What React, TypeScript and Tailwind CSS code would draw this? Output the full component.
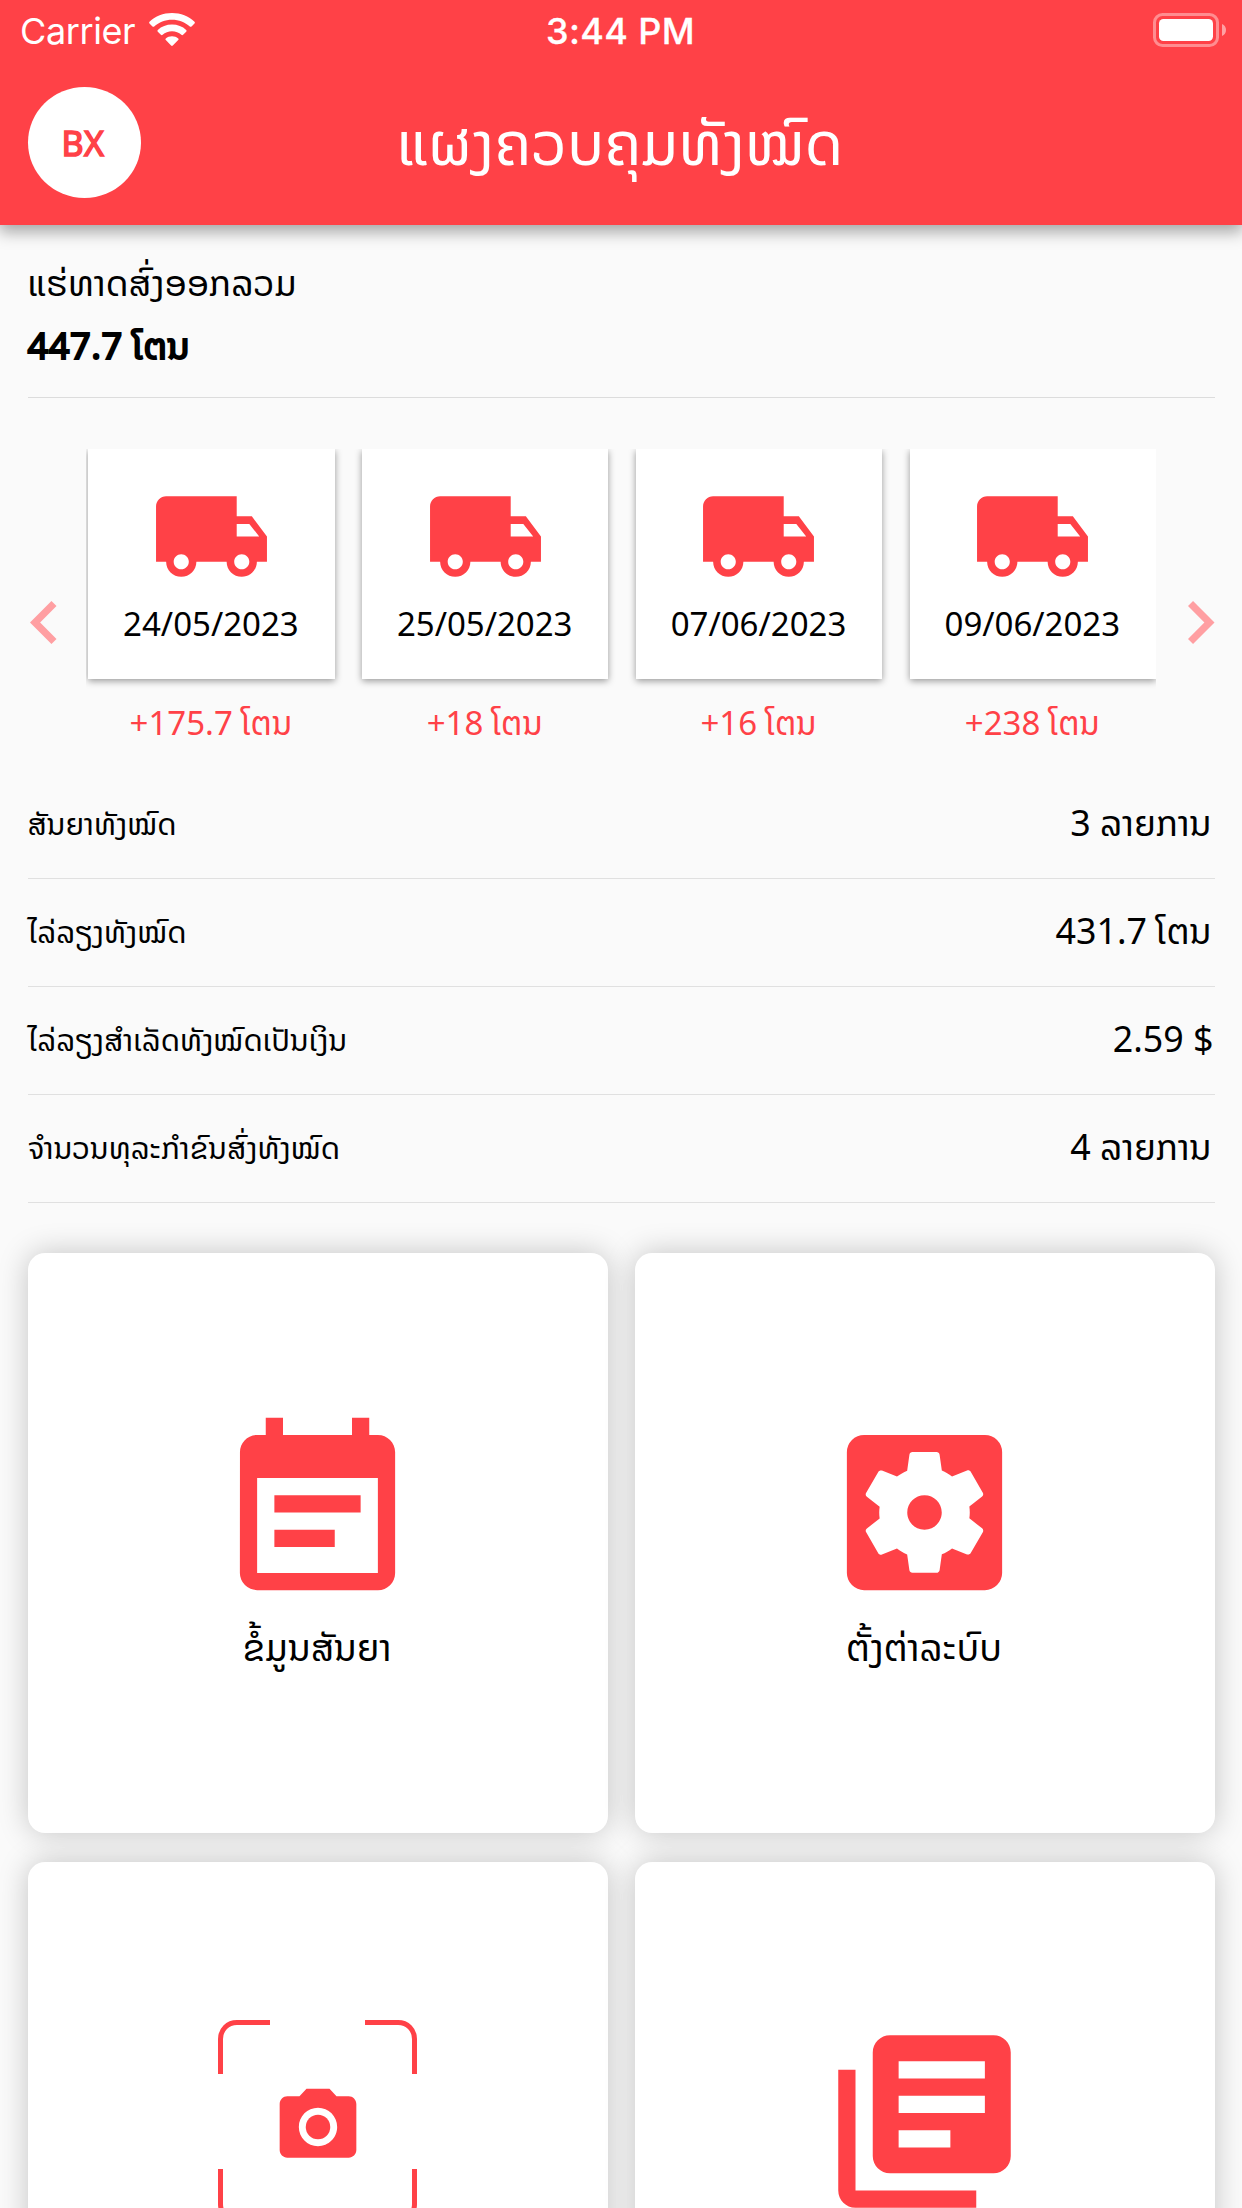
import React from 'react';
import {
  MdEventNote,
  MdLibraryBooks,
  MdLocalShipping,
  MdPhotoCamera,
  MdSettingsApplications,
} from 'react-icons/md';

const shipments = [
  { date: '24/05/2023', amount: '+175.7 ໂຕນ' },
  { date: '25/05/2023', amount: '+18 ໂຕນ' },
  { date: '07/06/2023', amount: '+16 ໂຕນ' },
  { date: '09/06/2023', amount: '+238 ໂຕນ' },
];

const totals = [
  { label: 'ສັນຍາທັງໝົດ', value: '3 ລາຍການ', end: 'mr-[3px]' },
  { label: 'ໄລ່ລຽງທັງໝົດ', value: '431.7 ໂຕນ', end: 'mr-[3px]' },
  { label: 'ໄລ່ລຽງສຳເລັດທັງໝົດເປັນເງິນ', value: '2.59 $', end: 'mr-[1px]' },
  { label: 'ຈຳນວນທຸລະກຳຂົນສົ່ງທັງໝົດ', value: '4 ລາຍການ', end: 'mr-[3px]' },
];

function StatusBar() {
  return (
    <div className="flex h-[60px] items-center justify-between pr-[16px] pl-[20px] font-['Inter',sans-serif] text-[36px] leading-[60px] text-white">
      <div className="flex w-[400px] items-center gap-[14px] pt-[2px]">
        <span className="tracking-[-0.400px]">Carrier</span>
        <svg className="-mt-[2px] h-[34px] w-[46px]" viewBox="0 0 46 34" fill="#fff">
          <path d="M23 0C14.3 0 6.300 3.300.5 8.700c-.5.5-.5 1.200 0 1.700l3 3c.5.5 1.200.5 1.700 0C9.900 9.200 16.100 6.700 23 6.700s13.100 2.500 17.800 6.700c.5.5 1.200.5 1.700 0l3-3c.5-.5.5-1.200 0-1.700C39.700 3.300 31.700 0 23 0z" />
          <path d="M23 11.600c-5.500 0-10.500 2-14.200 5.400-.5.5-.5 1.200 0 1.700l3.100 3.100c.5.5 1.200.5 1.700 0 2.500-2.200 5.800-3.500 9.400-3.500s6.900 1.300 9.400 3.500c.5.5 1.200.5 1.700 0l3.100-3.100c.5-.5.5-1.200 0-1.700-3.700-3.400-8.700-5.400-14.200-5.400z" />
          <path d="M23 23.200c-2.400 0-4.600.9-6.200 2.300-.5.5-.5 1.200 0 1.600l5.300 5.500c.5.5 1.200.5 1.700 0l5.400-5.500c.5-.5.5-1.200 0-1.600-1.600-1.400-3.800-2.300-6.200-2.300z" />
        </svg>
      </div>
      <span className="pt-[2px] pr-[5px] font-medium tracking-[0.400px] [-webkit-text-stroke:0.300px_white]">3:44 PM</span>
      <div className="flex w-[400px] justify-end">
        <svg className="h-[34px] w-[73px]" viewBox="0 0 73 34">
          <rect x="1.500" y="1.500" width="63" height="31" rx="8" fill="none" stroke="#fff" strokeOpacity=".4" strokeWidth="3" />
          <rect x="6" y="6" width="54" height="22" rx="4.500" fill="#fff" />
          <path d="M69 11c2.500 1 4 3.300 4 6s-1.500 5-4 6z" fill="#fff" fillOpacity=".5" />
        </svg>
      </div>
    </div>
  );
}

function Header() {
  return (
    <header className="h-[225px] bg-[#ff4147] shadow-[0_6px_15px_1px_rgba(0,0,0,0.34)]">
      <StatusBar />
      <div className="flex h-[165px] items-center justify-between px-[27.500px]">
        <div className="flex h-[111px] w-[113px] items-center justify-center rounded-[50%] bg-white pt-[2px] pr-[2px] text-[34px] tracking-[0.400px] text-[#ff4147] [-webkit-text-stroke:1.500px_#ff4147]">
          BX
        </div>
        <h1 className="pb-[2px] text-[60.600px] leading-[80px] text-white">ແຜງຄວບຄຸມທັງໝົດ</h1>
        <div className="w-[115px]" />
      </div>
    </header>
  );
}

function Chevron({ points }: { points: string }) {
  return (
    <svg className="h-[43px] w-[26.500px] shrink-0" viewBox="0 0 7.410 12" fill="#ff9fa2">
      <polygon points={points} />
    </svg>
  );
}

function ShipmentStrip() {
  return (
    <section className="flex h-[347px] items-center justify-between pr-[27.500px] pl-[30px]">
      <Chevron points="7.410,1.410 2.830,6 7.410,10.590 6,12 0,6 6,0" />
      <div className="mr-[3px] flex h-[347px] w-[1070px] gap-[27.500px] overflow-hidden pl-[2.500px]">
        {shipments.map((s) => (
          <div key={s.date} className="flex w-[246.300px] shrink-0 flex-col items-center">
            <div className="flex h-[230px] w-full flex-col items-center bg-white pt-[27px] shadow-[0_2px_7px_rgba(0,0,0,0.4)]">
              <MdLocalShipping className="h-[121px] w-[121px] text-[#ff4147]" />
              <span className="pr-[1px] text-[33px] leading-[54px]">{s.date}</span>
            </div>
            <span className="mt-[17px] pr-[1px] text-[33px] leading-[54px] whitespace-nowrap text-[#ff4147]">{s.amount}</span>
          </div>
        ))}
      </div>
      <Chevron points="0,1.410 4.580,6 0,10.590 1.410,12 7.410,6 1.410,0" />
    </section>
  );
}

function ScanFrame() {
  return (
    <div className="flex h-[207px] w-[207px] items-center justify-center">
      <div className="grid place-items-center">
        <svg className="col-start-1 row-start-1 h-[203px] w-[199px]" viewBox="0 0 199 203" fill="none" stroke="#ff4147" strokeWidth="5">
          <path d="M2.500 54V19C2.500 9.500 9.500 2.500 19 2.500H52M147 2.500h33c9.500 0 16.500 7 16.500 16.500v35M196.500 149v35c0 9.500-7 16.500-16.500 16.500h-33M52 200.500H19c-9.500 0-16.500-7-16.500-16.500v-35" />
        </svg>
        <MdPhotoCamera className="col-start-1 row-start-1 mt-[11px] h-[92px] w-[92px] text-[#ff4147]" />
      </div>
    </div>
  );
}

function Tile({ label, children }: { label: string; children: React.ReactNode }) {
  return (
    <div className="flex h-[580px] flex-col items-center rounded-[17px] bg-white pt-[156px] shadow-[0_0_30px_rgba(0,0,0,0.22)]">
      {children}
      <span className="mt-[3px] pr-[1px] text-[37px] leading-[56px]">{label}</span>
    </div>
  );
}

export default function App() {
  return (
    <div className="h-[2208px] w-[1242px] overflow-hidden bg-[#fafafa] font-['Noto_Sans','Noto_Sans_Lao',sans-serif] text-black">
      <Header />
      <section className="mx-[27.500px] h-[173px] border-b-[1px] border-[#dcdcdc] pt-[28px]">
        <p className="text-[35.900px] leading-[60px]">ແຮ່ທາດສົ່ງອອກລວມ</p>
        <p className="text-[36.300px] leading-[65px] tracking-[0.500px] [-webkit-text-stroke:2px_black]">447.7 ໂຕນ</p>
      </section>
      <div className="pt-[51px]">
        <ShipmentStrip />
      </div>
      <section className="mx-[27.500px] -mt-[25px]">
        {totals.map((t) => (
          <div key={t.label} className="flex h-[108px] items-center justify-between border-b border-[#e0e0e0]">
            <span className="pb-[1px] text-[30.400px] leading-[60px]">{t.label}</span>
            <span className={`pb-[6px] text-[35.800px] leading-[60px] ${t.end}`}>{t.value}</span>
          </div>
        ))}
      </section>
      <section className="mx-[27.500px] mt-[50px] grid grid-cols-2 gap-x-[27px] gap-y-[28.500px]">
        <Tile label="ຂໍ້ມູນສັນຍາ">
          <MdEventNote className="h-[207px] w-[207px] shrink-0 text-[#ff4147]" />
        </Tile>
        <Tile label="ຕັ້ງຕ່າລະບົບ">
          <MdSettingsApplications className="h-[207px] w-[207px] shrink-0 text-[#ff4147]" />
        </Tile>
        <Tile label="">
          <ScanFrame />
        </Tile>
        <Tile label="">
          <MdLibraryBooks className="h-[207px] w-[207px] shrink-0 text-[#ff4147]" />
        </Tile>
      </section>
    </div>
  );
}
